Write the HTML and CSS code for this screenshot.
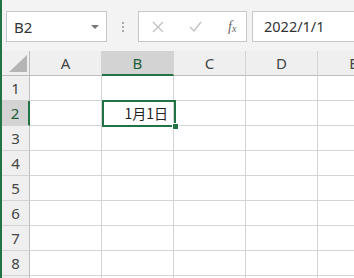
FILE: index.html
```html
<!DOCTYPE html>
<html>
  <head>
    <title>Sheet1</title>
    <link rel="stylesheet" href="styles.css">
  </head>
  <body>
    <div class="app">
      <div class="toolbar">
        <div class="name-box">
          <span>B2</span>
          <span class="caret"></span>
        </div>
        <div class="grip"><i></i><i></i><i></i></div>
        <div class="fx-buttons">
          <svg class="btn" width="12" height="12" viewBox="0 0 12 12">
            <path d="M1 1 L11 11 M11 1 L1 11" stroke="#c3c3c3" stroke-width="1.4" fill="none"/>
          </svg>
          <svg class="btn" width="13" height="11" viewBox="0 0 13 11">
            <path d="M1 6 L5 10 L12 1" stroke="#c3c3c3" stroke-width="1.4" fill="none"/>
          </svg>
          <span class="fx">f<sub>x</sub></span>
        </div>
        <div class="formula">2022/1/1</div>
      </div>

      <div class="sheet">
        <div class="corner">
          <svg width="18" height="17" viewBox="0 0 18 17"><polygon points="18,0 18,17 0,17" fill="#b5b5b5"/></svg>
        </div>
        <div class="col-head">A</div>
        <div class="col-head active">B</div>
        <div class="col-head">C</div>
        <div class="col-head">D</div>
        <div class="col-head">E</div>

        <div class="row-head">1</div>
        <div class="cell"></div><div class="cell"></div><div class="cell"></div><div class="cell"></div><div class="cell"></div>

        <div class="row-head active">2</div>
        <div class="cell"></div><div class="cell value">1月1日</div><div class="cell"></div><div class="cell"></div><div class="cell"></div>

        <div class="row-head">3</div>
        <div class="cell"></div><div class="cell"></div><div class="cell"></div><div class="cell"></div><div class="cell"></div>

        <div class="row-head">4</div>
        <div class="cell"></div><div class="cell"></div><div class="cell"></div><div class="cell"></div><div class="cell"></div>

        <div class="row-head">5</div>
        <div class="cell"></div><div class="cell"></div><div class="cell"></div><div class="cell"></div><div class="cell"></div>

        <div class="row-head">6</div>
        <div class="cell"></div><div class="cell"></div><div class="cell"></div><div class="cell"></div><div class="cell"></div>

        <div class="row-head">7</div>
        <div class="cell"></div><div class="cell"></div><div class="cell"></div><div class="cell"></div><div class="cell"></div>

        <div class="row-head">8</div>
        <div class="cell"></div><div class="cell"></div><div class="cell"></div><div class="cell"></div><div class="cell"></div>

        <div class="row-head"></div>
        <div class="cell"></div><div class="cell"></div><div class="cell"></div><div class="cell"></div><div class="cell"></div>

        <div class="selection"><span class="handle"></span></div>
      </div>
    </div>
  </body>
</html>
```

FILE: styles.css
```css
/* Excel-like sheet view */
body {
  margin: 0;
  background: #f3f3f3;
  font-family: "Noto Sans", "Liberation Sans", sans-serif;
  color: #444;
}
.app {
  width: 352px;
  height: 278px;
  overflow: hidden;
  border-left: 2px solid #217346;
  background: #f3f3f3;
}

/* formula bar */
.toolbar {
  display: flex;
  align-items: flex-start;
  height: 51px;
  box-sizing: border-box;
  padding: 11px 0 0 4px;
}
.name-box {
  width: 101px;
  height: 31px;
  box-sizing: border-box;
  border: 1px solid #c8c8c8;
  background: #fff;
  display: flex;
  align-items: center;
  justify-content: space-between;
  padding: 0 7px 0 7px;
  font-size: 15px;
  color: #333;
}
.caret {
  width: 0;
  height: 0;
  border-left: 4px solid transparent;
  border-right: 4px solid transparent;
  border-top: 4px solid #777;
}
.grip {
  width: 31px;
  height: 31px;
  display: flex;
  flex-direction: column;
  align-items: center;
  justify-content: center;
  gap: 2px;
}
.grip i {
  width: 2px;
  height: 2px;
  background: #a8a8a8;
}
.fx-buttons {
  width: 109px;
  height: 31px;
  box-sizing: border-box;
  border: 1px solid #c8c8c8;
  background: #fff;
  display: flex;
  align-items: center;
  padding: 0 0 0 13px;
}
.fx-buttons .btn:nth-child(2) {
  margin-left: 25px;
}
.fx {
  margin-left: 26px;
  font-family: "Liberation Serif", serif;
  font-style: italic;
  font-size: 14px;
  color: #666;
  line-height: 1;
}
.fx sub {
  font-size: 10px;
  vertical-align: -1px;
}
.formula {
  margin-left: 5px;
  flex: 1;
  height: 31px;
  box-sizing: border-box;
  border: 1px solid #c8c8c8;
  border-right: none;
  background: #fff;
  padding-left: 11px;
  line-height: 29px;
  font-size: 14.5px;
  color: #333;
}

/* grid */
.sheet {
  position: relative;
  display: grid;
  grid-template-columns: 28px repeat(5, 72px);
  grid-auto-rows: 25px;
  background: #fff;
}
.corner,
.col-head,
.row-head {
  background: #efefef;
  box-sizing: border-box;
  border-right: 1px solid #d4d4d4;
  border-bottom: 1px solid #bdbdbd;
  display: flex;
  align-items: center;
  justify-content: center;
  font-size: 15px;
  color: #444;
}
.corner {
  background: #efefef;
  align-items: flex-end;
  justify-content: flex-end;
  padding: 0 2px 3px 0;
  border-right: 1px solid #bdbdbd;
}
.row-head {
  border-right: 1px solid #bdbdbd;
  border-bottom: 1px solid #d4d4d4;
}
.col-head.active {
  background: #d3d3d3;
  color: #1e5e3a;
  border-bottom: 2px solid #217346;
}
.row-head.active {
  background: #d3d3d3;
  color: #1e5e3a;
  border-right: 2px solid #217346;
}
.cell {
  box-sizing: border-box;
  border-right: 1px solid #d4d4d4;
  border-bottom: 1px solid #d4d4d4;
}
.value {
  text-align: right;
  padding-right: 5px;
  font-family: "Noto Sans CJK JP", sans-serif;
  font-size: 14px;
  line-height: 24px;
  color: #222;
}
.selection {
  position: absolute;
  left: 100px;
  top: 49px;
  width: 74px;
  height: 27px;
  box-sizing: border-box;
  border: 2px solid #217346;
}
.handle {
  position: absolute;
  right: -5px;
  bottom: -5px;
  width: 5px;
  height: 5px;
  background: #217346;
  border: 1px solid #fff;
}
```
